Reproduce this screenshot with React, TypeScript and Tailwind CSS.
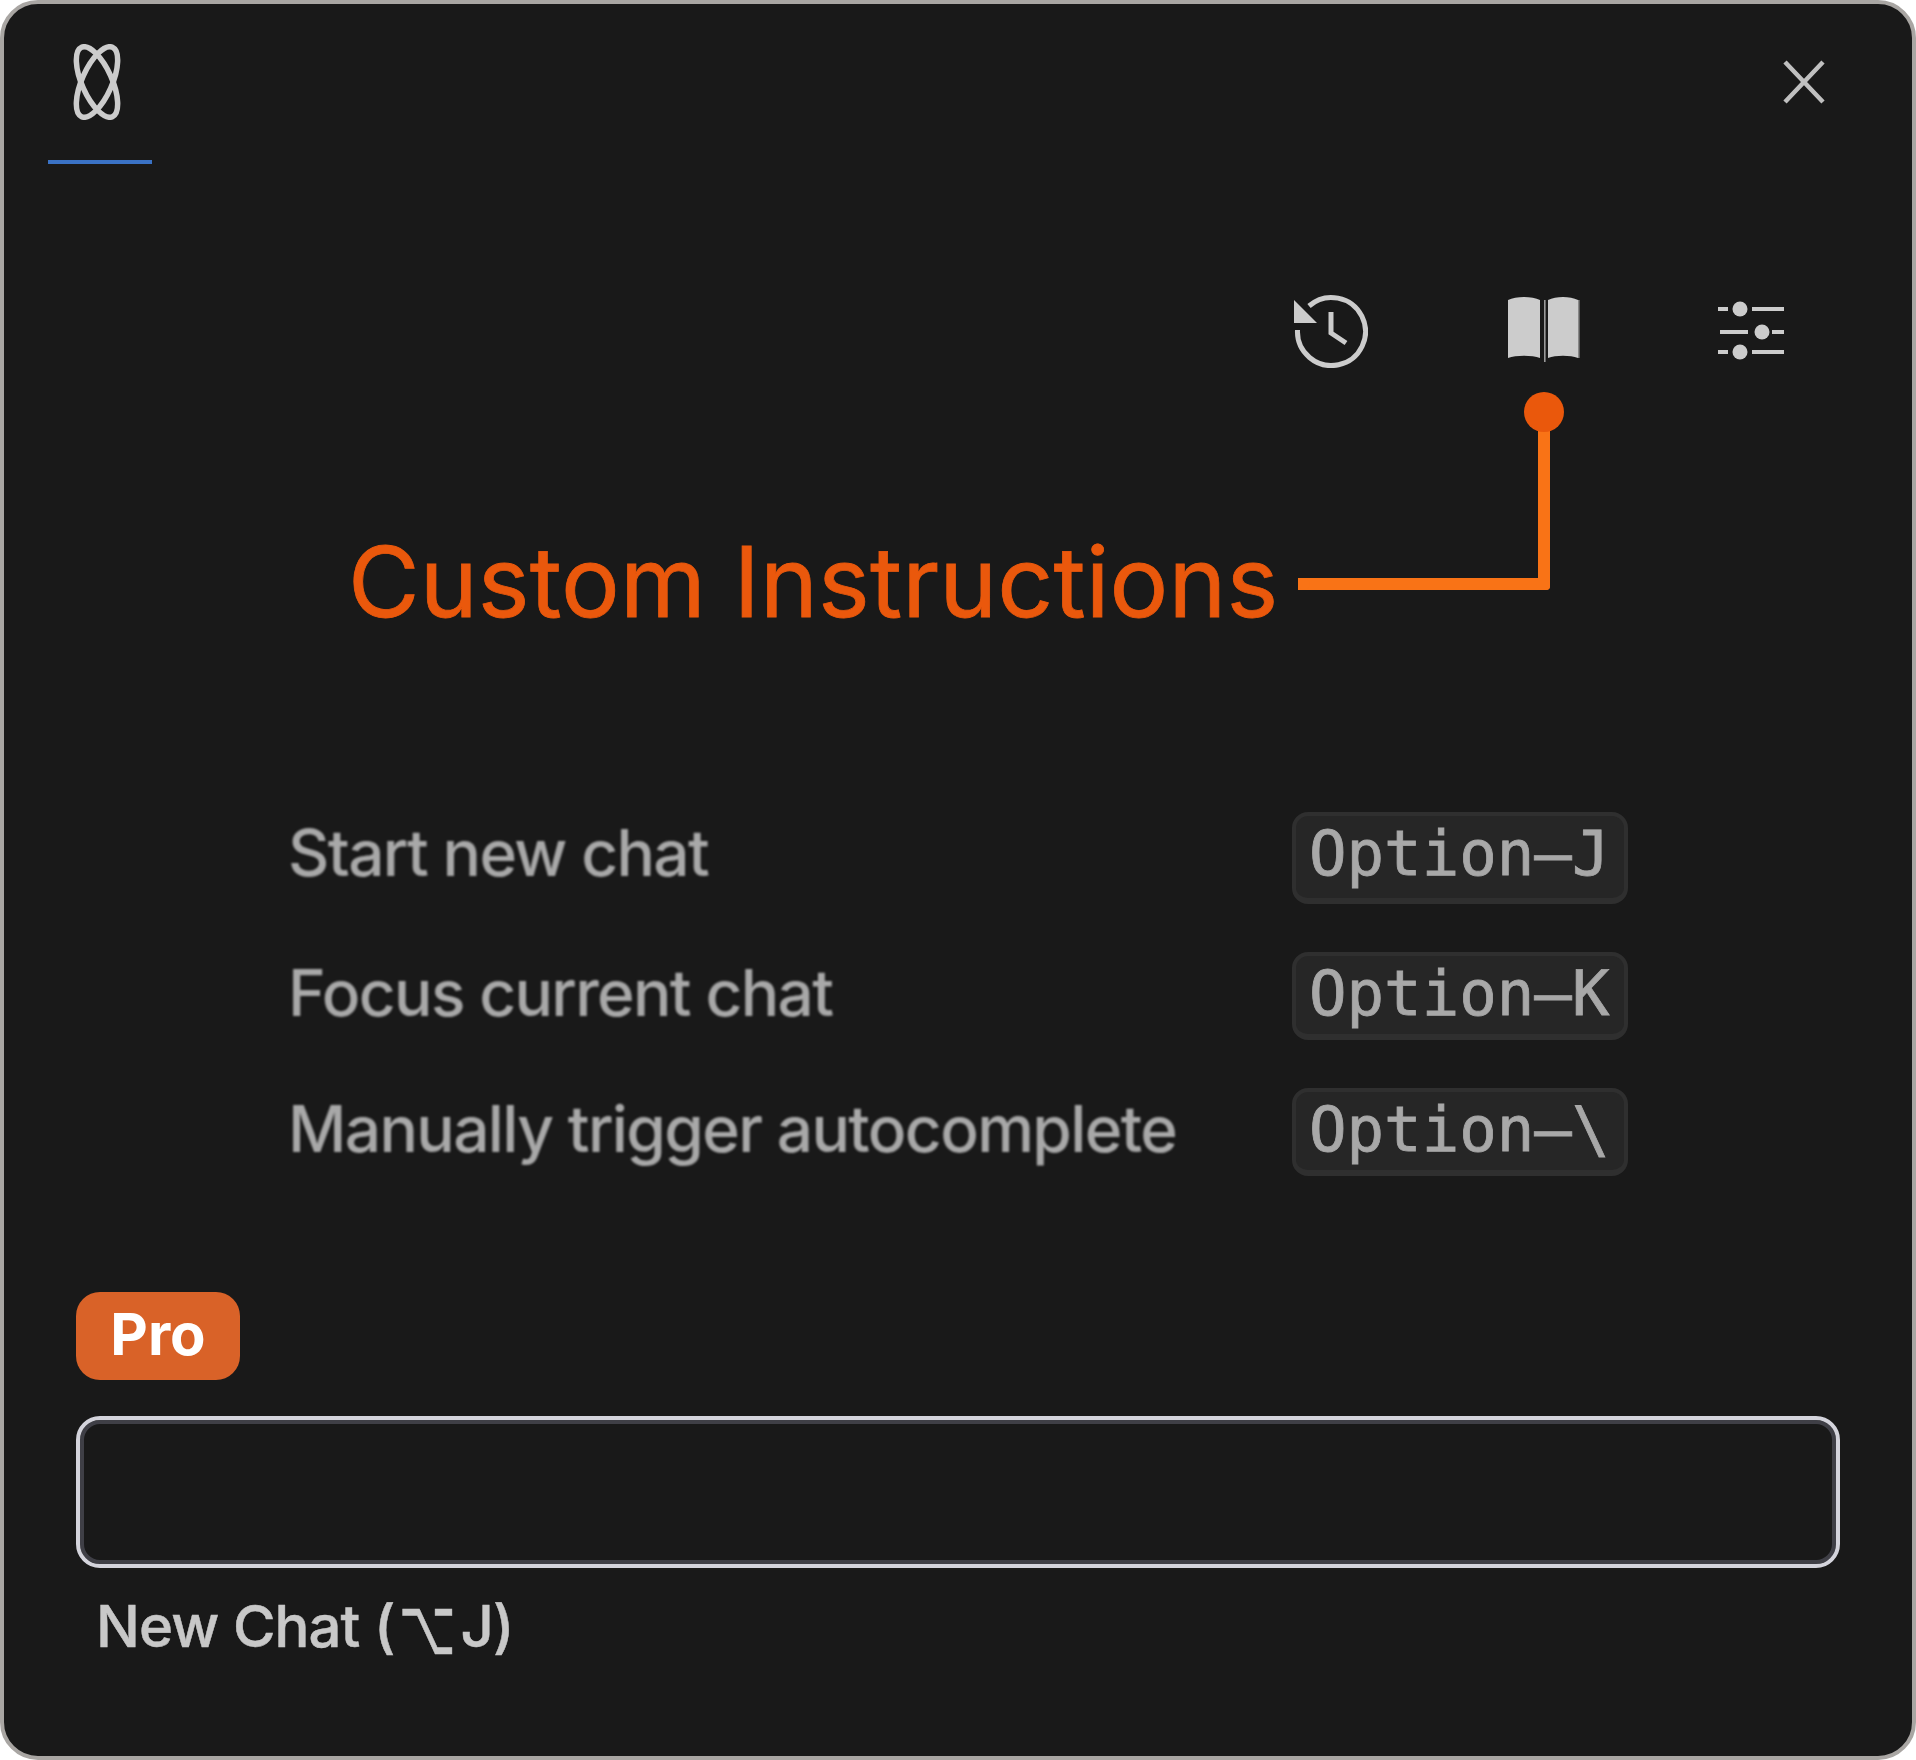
const sans = "font-['Inter','Liberation_Sans',sans-serif]";

function Logo() {
  return (
    <svg width="48" height="76" viewBox="0 0 48 76" fill="none" stroke="#cccccc" strokeWidth="5.5">
      <ellipse cx="24" cy="38" rx="15" ry="38" transform="rotate(-24 24 38)" />
      <ellipse cx="24" cy="38" rx="15" ry="38" transform="rotate(24 24 38)" />
    </svg>
  );
}

function CloseIcon() {
  return (
    <svg width="42" height="44" viewBox="0 0 42 44" fill="none" stroke="#c0c0c0" strokeWidth="4.5">
      <path d="M2 2 L40 42 M40 2 L2 42" />
    </svg>
  );
}

function HistoryIcon() {
  return (
    <svg width="76" height="76" viewBox="0 0 76 76" fill="none">
      <path d="M17 14 A34 34 0 1 1 5.5 38" stroke="#cccccc" strokeWidth="5" />
      <path d="M2 8 L2 31 L25 31 Z" fill="#cccccc" />
      <path d="M39 20 L39 41 L54 51" stroke="#cccccc" strokeWidth="5" />
    </svg>
  );
}

function BookIcon() {
  return (
    <svg width="72" height="76" viewBox="0 0 72 76" fill="#cccccc">
      <path d="M0 8 C8 4 24 4 32 8 L32 66 C24 63 8 63 0 66 Z" />
      <path d="M40 8 C48 4 62 4 70 8 L70 66 C62 63 48 63 40 66 Z" />
      <rect x="36" y="8" width="1.6" height="62" fill="#999999" />
      <rect x="70" y="8" width="1.6" height="58" fill="#888888" />
    </svg>
  );
}

function SlidersIcon() {
  return (
    <svg width="68" height="76" viewBox="0 0 68 76" fill="#cccccc" stroke="none">
      <rect x="2" y="15" width="10" height="4" />
      <rect x="36" y="15" width="32" height="4" />
      <circle cx="24" cy="17" r="7.5" />
      <rect x="4" y="38" width="28" height="4" />
      <rect x="56" y="38" width="12" height="4" />
      <circle cx="46" cy="40" r="7.5" />
      <rect x="2" y="58" width="10" height="4" />
      <rect x="36" y="58" width="32" height="4" />
      <circle cx="24" cy="60" r="7.5" />
    </svg>
  );
}

const rows = [
  { label: "Start new chat", text: "Option–J", h: "h-[92px]", lift: "-translate-y-[5px]", pad: "pb-[7px]" },
  { label: "Focus current chat", text: "Option–K", h: "h-[88px]", lift: "-translate-y-[3px]", pad: "pb-[3px]" },
  { label: "Manually trigger autocomplete", text: "Option–\\", h: "h-[88px]", lift: "-translate-y-[3px]", pad: "pb-[3px]" },
];

export default function App() {
  return (
    <div className="w-[1916px] h-[1760px] bg-white">
      <div className="relative w-full h-full rounded-[38px] border-4 border-[#a9a6a3] bg-[#191919] flex flex-col overflow-hidden">
        <div className="h-[160px] flex justify-between pl-[44px] pr-[87px]">
          <div className="w-[104px] h-[160px] border-b-4 border-[#3a72c5] flex justify-center pt-[40px] pr-[6px]">
            <div className="h-[76px] blur-[0.7px]"><Logo /></div>
          </div>
          <div className="pt-[56px] blur-[0.5px]"><CloseIcon /></div>
        </div>

        <div className="mt-[128px] h-[76px] flex justify-end pr-[128px] gap-[136px] blur-[0.7px]">
          <div className="mr-[4px]"><HistoryIcon /></div>
          <BookIcon />
          <SlidersIcon />
        </div>

        <div className={`mt-[444px] flex flex-col gap-[48px] pl-[284px] ${sans}`}>
          {rows.map((r) => (
            <div key={r.text} className={`flex items-center ${r.h}`}>
              <div className={`w-[1004px] text-[64px] leading-[76px] font-medium tracking-[-1.65px] text-[#a8a8a8] blur-[0.8px] ${r.lift}`}>{r.label}</div>
              <div className={`w-[336px] h-full rounded-[16px] border-4 border-b-[6px] border-[#2f2f2f] bg-[#262626] flex items-center pl-[13px] ${r.pad}`}>
                <span className="text-[62.4px] [-webkit-text-stroke:0.8px_#a8a8a8] text-[#a8a8a8] font-['DejaVu_Sans_Mono',monospace] whitespace-nowrap blur-[0.7px]">
                  {r.text}
                </span>
              </div>
            </div>
          ))}
        </div>

        <div className={`mt-[116px] ml-[72px] w-[164px] h-[88px] rounded-[24px] bg-[#d96228] flex items-center justify-center pb-[3px] ${sans}`}>
          <span className="text-[58px] font-bold text-white blur-[0.6px]">Pro</span>
        </div>

        <div className="mt-[36px] mx-[72px] h-[152px] rounded-[24px] border-4 border-[#d4d4dc] bg-[#191919] shadow-[inset_0_0_0_4px_#3f3f46]" />

        <div className={`mt-[22px] ml-[92px] text-[58px] leading-[72px] font-medium tracking-[-0.9px] text-[#c8c8c8] blur-[0.7px] [-webkit-text-stroke:0.5px_#c8c8c8] ${sans}`}>
          New Chat (<span className="inline-block scale-x-[0.85] scale-y-[1.35] font-['DejaVu_Sans',sans-serif]">⌥</span>J)
        </div>

        <div className={`absolute left-[344px] top-[520px] text-[98px] leading-[116px] tracking-[0.15px] [-webkit-text-stroke:0.8px_#ea580c] text-[#ea580c] whitespace-nowrap ${sans}`}>
          Custom Instructions
        </div>
        <div className="absolute left-[1294px] top-[426px] w-[252px] h-[160px] border-r-[12px] border-b-[12px] border-[#f97316] rounded-br-[4px]" />
        <div className="absolute left-[1294px] top-[574px] w-[12px] h-[12px] rounded-full bg-[#f97316]" />
        <div className="absolute left-[1520px] top-[388px] w-[40px] h-[40px] rounded-full bg-[#ea580c]" />
      </div>
    </div>
  );
}
